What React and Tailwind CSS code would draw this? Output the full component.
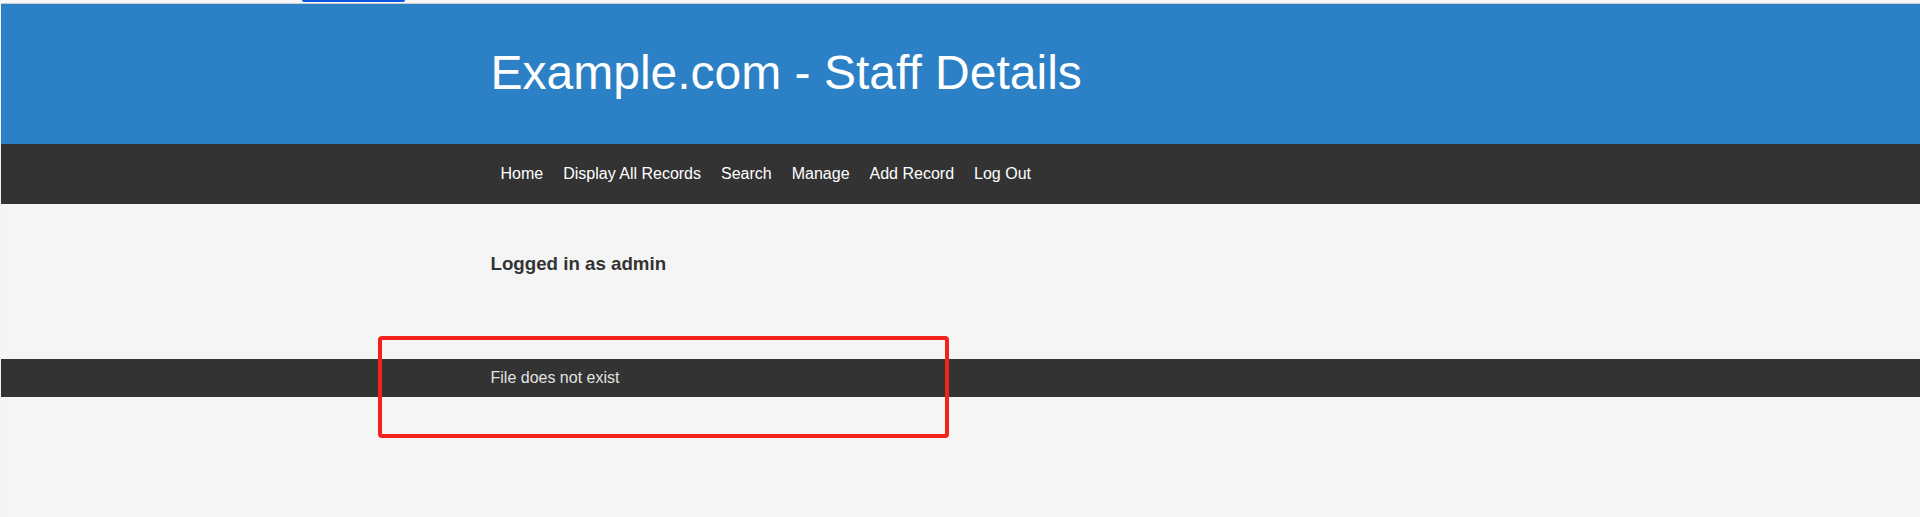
import React from "react";

export default function App() {
  const links = ["Home", "Display All Records", "Search", "Manage", "Add Record", "Log Out"];
  return (
    <div
      className="relative min-h-[517px] bg-[#f5f5f5] border-l border-[#f3f3f3] overflow-hidden"
      style={{ fontFamily: '"Liberation Sans", Arial, sans-serif' }}
    >
      {/* top strip */}
      <div className="h-[3px] bg-[#f7f7f7]" />
      <div className="h-px bg-[#c9cdd2]" />
      {/* focus bar */}
      <div className="absolute left-[301px] top-0 h-[2px] w-[103px] rounded-b-[2px] bg-[#0b57e3]" />

      {/* header */}
      <header className="bg-[#2c80c6] h-[140px] flex items-center">
        <div className="w-[940px] mx-auto">
          <h1 className="text-[48px] leading-normal font-normal text-white -mt-[2px]">
            Example.com - Staff Details
          </h1>
        </div>
      </header>

      {/* nav */}
      <nav className="bg-[#333333] h-[60px] flex items-center">
        <div className="w-[940px] mx-auto flex">
          {links.map((l) => (
            <a key={l} className="px-[10px] text-[16px] leading-normal text-white">
              {l}
            </a>
          ))}
        </div>
      </nav>

      {/* content */}
      <main className="h-[155px]">
        <div className="w-[940px] mx-auto pt-[46px]">
          <h3 className="text-[18.72px] leading-normal font-bold text-[#333333]">
            Logged in as admin
          </h3>
        </div>
      </main>

      {/* footer */}
      <footer className="bg-[#333333] py-[10px] h-[38px]">
        <div className="w-[940px] mx-auto">
          <p className="text-[16px] leading-normal text-[#e2e2e2] -mt-[3px]">File does not exist</p>
        </div>
      </footer>

      {/* red annotation box */}
      <div className="absolute left-[377px] top-[336px] w-[571px] h-[102px] border-4 border-[#f5221b] rounded-[4px]" />
    </div>
  );
}
